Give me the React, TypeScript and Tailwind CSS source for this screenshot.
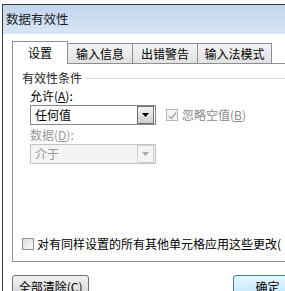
import React from 'react';

const font = { fontFamily: '"Noto Sans CJK SC", "Noto Sans", sans-serif' };

const Arrow = ({ color }: { color: string }) => (
  <svg width="7" height="4" viewBox="0 0 7 4">
    <path d="M0 0 H7 L3.5 4 Z" fill={color} />
  </svg>
);

const Tab = ({ label, w, active }: { label: string; w: string; active?: boolean }) =>
  active ? (
    <div
      className={`${w} h-[23px] -mb-px relative z-10 bg-white border border-b-0 border-[#8c8e94] flex items-center justify-center`}
    >
      {label}
    </div>
  ) : (
    <div
      className={`${w} h-[20px] -ml-px bg-gradient-to-b from-[#f4f4f4] to-[#e2e2e2] border border-b-0 border-[#8c8e94] flex items-center justify-center`}
    >
      {label}
    </div>
  );

const App: React.FC = () => {
  return (
    <div className="w-[285px] h-[291px] overflow-hidden bg-white pt-[4px] pl-[2px] text-[12px] text-black" style={font}>
      <div className="w-[300px] h-[287px] border-l border-t border-[#3c3c3c] flex flex-col">
        {/* title bar */}
        <div className="h-[29px] shrink-0 bg-gradient-to-b from-[#c3d6ef] to-[#d8e5f5] pl-[3px] flex items-center text-[12.5px] text-[#1e1e1e]">
          数据有效性
        </div>

        {/* client area */}
        <div className="flex-1 bg-white pl-[9px] pt-[7px] flex flex-col">
          <div className="flex items-end h-[22px]">
            <Tab label="设置" w="w-[56px]" active />
            <Tab label="输入信息" w="w-[66px]" />
            <Tab label="出错警告" w="w-[66px]" />
            <Tab label="输入法模式" w="w-[75px]" />
          </div>

          <div className="w-[290px] h-[199px] border border-[#8c8e94] pl-[9px] pt-[7px] pb-[8px] flex flex-col">
            <div className="flex items-center h-[14px]">
              <span className="text-[#1e1e1e]">有效性条件</span>
              <div className="flex-1 h-px bg-[#d5dbe3] ml-[4px]" />
            </div>

            <div className="pl-[8px] mt-[4px] h-[14px] flex items-center">
              允许(<u>A</u>):
            </div>

            <div className="pl-[8px] mt-[2px] flex items-center">
              <div className="w-[126px] h-[20px] border border-[#828790] bg-white flex items-center">
                <span className="flex-1 pl-[4px]">任何值</span>
                <div className="w-[17px] h-[18px] mr-px bg-gradient-to-b from-[#f2f2f2] to-[#cfcfcf] border border-[#707070] flex items-center justify-center">
                  <Arrow color="#000" />
                </div>
              </div>
              <div className="ml-[10px] w-[12px] h-[12px] border border-[#b5b5b5] bg-[#f4f4f4] flex items-center justify-center">
                <svg width="9" height="9" viewBox="0 0 9 9">
                  <path d="M1 5 L3.5 7.5 L8 1.5" fill="none" stroke="#a8a8a8" strokeWidth="1.4" />
                </svg>
              </div>
              <span className="ml-[4px] text-[#8a8a8a]">忽略空值(<u>B</u>)</span>
            </div>

            <div className="pl-[8px] mt-[3px] h-[14px] flex items-center text-[#9a9a9a]">
              数据(<u>D</u>):
            </div>

            <div className="pl-[8px] mt-[2px]">
              <div className="w-[126px] h-[20px] border border-[#c3c3c3] bg-[#f4f4f4] flex items-center text-[#9a9a9a]">
                <span className="flex-1 pl-[4px]">介于</span>
                <div className="w-[17px] h-[18px] mr-px bg-[#f4f4f4] border border-[#d0d0d0] flex items-center justify-center">
                  <Arrow color="#a8a8a8" />
                </div>
              </div>
            </div>

            <div className="flex-1" />

            <div className="flex items-center whitespace-nowrap">
              <div className="w-[12px] h-[12px] border border-[#8f8f8f] bg-gradient-to-br from-[#dcdcdc] to-[#fafafa]" />
              <span className="ml-[3px]">对有同样设置的所有其他单元格应用这些更改(</span>
            </div>
          </div>

          <div className="flex mt-[13px]">
            <div className="w-[84px] h-[23px] rounded-[3px] border border-[#707070] bg-gradient-to-b from-[#f2f2f2] to-[#d4d4d4] flex items-center justify-center">
              全部清除(<u>C</u>)
            </div>
            <div className="ml-[144px] w-[75px] h-[23px] rounded-[3px] border border-[#3c7fb1] bg-gradient-to-b from-[#eaf6fd] to-[#bee6fd] flex items-center justify-center">
              确定
            </div>
          </div>
        </div>
      </div>
    </div>
  );
};

export default App;
